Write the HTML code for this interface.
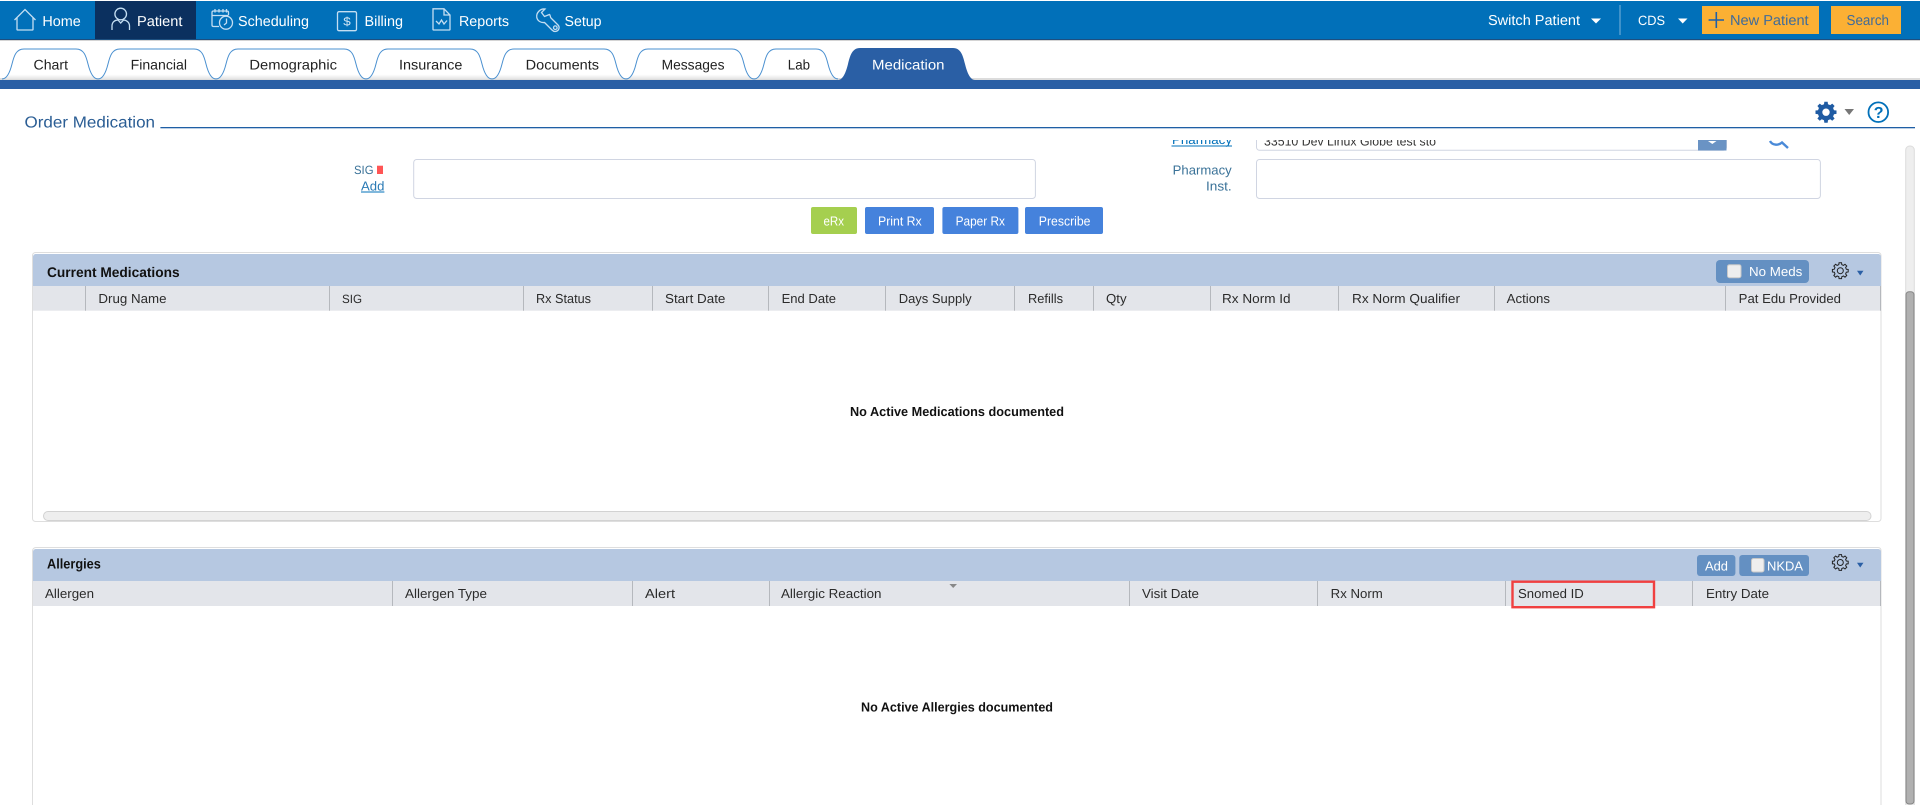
<!DOCTYPE html>
<html lang="en">
<head>
<meta charset="utf-8">
<title>Order Medication</title>
<style>
html,body{margin:0;padding:0;background:#fff;width:1920px;height:805px;overflow:hidden}
svg{display:block}
text{font-family:"Liberation Sans",Arial,sans-serif;text-rendering:geometricPrecision}
.n{font-size:14.4px;fill:#fff}
.t{font-size:14px;fill:#222}
.h{font-size:13px;fill:#2b2b2b}
.b{font-weight:700;font-size:14px;fill:#111}
.l{font-size:13px;fill:#3a7298}
.w{font-size:13px;fill:#fff}
.ic{fill:none;stroke:#c4def2;stroke-width:1.3}
</style>
</head>
<body>
<svg xmlns="http://www.w3.org/2000/svg" width="1920" height="805" viewBox="0 0 1920 805">
<defs>
<clipPath id="c"><rect x="0" y="140" width="1920" height="30"/></clipPath>
<linearGradient id="tg" x1="0" y1="0" x2="0" y2="1"><stop offset="0" stop-color="#fff"/><stop offset=".85" stop-color="#fff"/><stop offset="1" stop-color="#e4e4e4"/></linearGradient>
<path id="g" d="M6.02-1.5 7.9-1.25V1.25L6.02 1.5 5.31 3.19 6.47 4.7 4.7 6.47 3.19 5.31 1.5 6.02 1.25 7.9H-1.25L-1.5 6.02-3.19 5.31-4.7 6.47-6.47 4.7-5.31 3.19-6.02 1.5-7.9 1.25V-1.25L-6.02-1.5-5.31-3.19-6.47-4.7-4.7-6.47-3.19-5.31-1.5-6.02-1.25-7.9H1.25L1.5-6.02 3.19-5.31 4.7-6.47 6.47-4.7 5.31-3.19Z"/>
</defs>

<!-- top nav -->
<rect x="0" y="1" width="1920" height="38" fill="#0170b9"/>
<rect x="0" y="39" width="1920" height="1" fill="#1d4f80"/>
<rect x="0" y="40" width="1920" height="1" fill="#d4d4d4"/>
<rect x="95" y="1" width="101" height="38" fill="#0b305f"/>

<path class="ic" d="M14.5 20 25 9.5 35.5 20M17 17.5V29.5C17 30 17.5 30 18 30H32C32.800 30 33 30 33 29.500V17.500"/>
<text class="n" x="42.400" y="26" textLength="38.400" lengthAdjust="spacingAndGlyphs">Home</text>

<circle class="ic" cx="120.700" cy="14" r="5.800"/>
<path class="ic" d="M112 30V26C112 22 115 20 118 20L120.700 23 123.500 20C126 20 129.500 22 129.500 26V30"/>
<text class="n" x="137" y="26" textLength="45.400" lengthAdjust="spacingAndGlyphs">Patient</text>

<path class="ic" d="M219 26.500H213.500C212.500 26.500 212 26 212 25V12.500C212 11.500 212.500 11 213.500 11H227C228 11 228.500 11.500 228.500 12.500V15M212 15.500H228.500M215 9V12.500M219 9V12.500M223 9V12.500M226.500 9V12.500"/>
<circle class="ic" cx="226" cy="22.700" r="6.500"/>
<path class="ic" d="M226.500 18.500V23L224 25"/>
<text class="n" x="238" y="26" textLength="71" lengthAdjust="spacingAndGlyphs">Scheduling</text>

<rect class="ic" x="337.500" y="11.700" width="19" height="19" rx="1.500"/>
<text x="343.300" y="25.500" font-size="12" fill="#d5e8f6" textLength="7.500" lengthAdjust="spacingAndGlyphs">$</text>
<text class="n" x="364.500" y="26" textLength="38.500" lengthAdjust="spacingAndGlyphs">Billing</text>

<path class="ic" d="M433 8.800H444L450 15V29.500C450 30 449.700 30 449 30H434C433.300 30 433 30 433 29.500ZM444 8.800V15H450M436 21 439 24 441.500 20 444 24 447 20.500"/>
<text class="n" x="459" y="26" textLength="50" lengthAdjust="spacingAndGlyphs">Reports</text>

<path class="ic" d="M545 9 541.500 12.500 544.500 16.500 549.500 14.500C550.500 15 550 17 551 18L558 25C560 27 559 30 557 31 555 32 553 31 552 30L544.500 22.500C541 23 537.500 21 536.800 17.500 536 13 540 8.500 545 9Z"/>
<circle class="ic" cx="555.300" cy="27.700" r="1.800"/>
<text class="n" x="564.500" y="26" textLength="37" lengthAdjust="spacingAndGlyphs">Setup</text>

<text class="n" x="1488" y="25" textLength="92" lengthAdjust="spacingAndGlyphs">Switch Patient</text>
<path d="M1591 18.500H1601L1596 23.500Z" fill="#fff"/>
<rect x="1619.500" y="5" width="1" height="30" fill="#7db3da"/>
<text class="n" style="font-size:13.500px" x="1638" y="25" textLength="27" lengthAdjust="spacingAndGlyphs">CDS</text>
<path d="M1678 18.500H1687.500L1682.700 23.500Z" fill="#fff"/>

<rect x="1702" y="6" width="117" height="28" fill="#fbb034"/>
<path d="M1708.600 20H1724M1716.300 12V28" stroke="#1f5fa8" stroke-width="1.600" fill="none"/>
<text class="n" style="fill:#3f6b9a" x="1730" y="25" textLength="78.600" lengthAdjust="spacingAndGlyphs">New Patient</text>
<rect x="1831" y="6" width="70" height="28" fill="#fbb034"/>
<text class="n" style="fill:#3f6b9a" x="1846.500" y="25" textLength="42.500" lengthAdjust="spacingAndGlyphs">Search</text>

<!-- tab row -->
<rect x="0" y="78" width="1920" height="2" fill="#dcdcdc"/>
<rect x="0" y="80" width="1920" height="9" fill="#2a5fa5"/>
<g fill="url(#tg)" stroke="#4a90d0" stroke-width="1">
<path d="M2 79C7 79 10 72 12 64 14 56 16 49 24 49H76C84 49 86 56 88 64 90 72 93 79 98 79"/>
<path d="M98 79C103 79 106 72 108 64 110 56 112 49 120 49H194C202 49 204 56 206 64 208 72 211 79 216 79"/>
<path d="M216 79C221 79 224 72 226 64 228 56 230 49 238 49H344C352 49 354 56 356 64 358 72 361 79 366 79"/>
<path d="M366 79C371 79 374 72 376 64 378 56 380 49 388 49H470C478 49 480 56 482 64 484 72 487 79 492 79"/>
<path d="M492 79C497 79 500 72 502 64 504 56 506 49 514 49H604C612 49 614 56 616 64 618 72 621 79 626 79"/>
<path d="M626 79C631 79 634 72 636 64 638 56 640 49 648 49H732C740 49 742 56 744 64 746 72 749 79 754 79"/>
<path d="M754 79C759 79 762 72 764 64 766 56 768 49 776 49H816C824 49 826 56 828 64 830 72 833 79 838 79"/>
</g>
<path d="M838 80C843 80 846 72 848 64 850 56 852 48 860 48H953C961 48 963 56 965 64 967 72 970 80 975 80Z" fill="#2a5fa5"/>
<text class="t" x="33.500" y="69.500" textLength="34.500" lengthAdjust="spacingAndGlyphs">Chart</text>
<text class="t" x="130.600" y="69.500" textLength="56.400" lengthAdjust="spacingAndGlyphs">Financial</text>
<text class="t" x="249.400" y="69.500" textLength="87.600" lengthAdjust="spacingAndGlyphs">Demographic</text>
<text class="t" x="399" y="69.500" textLength="63.400" lengthAdjust="spacingAndGlyphs">Insurance</text>
<text class="t" x="525.700" y="69.500" textLength="73.300" lengthAdjust="spacingAndGlyphs">Documents</text>
<text class="t" x="661.600" y="69.500" textLength="62.900" lengthAdjust="spacingAndGlyphs">Messages</text>
<text class="t" x="787.800" y="69.500" textLength="22.200" lengthAdjust="spacingAndGlyphs">Lab</text>
<text class="t" style="fill:#fff" x="872" y="69.500" textLength="72.500" lengthAdjust="spacingAndGlyphs">Medication</text>

<!-- page heading -->
<text x="24.500" y="127.500" font-size="16" fill="#2a5d94" textLength="130.500" lengthAdjust="spacingAndGlyphs">Order Medication</text>
<rect x="160.400" y="127" width="1754.600" height="1.300" fill="#1f5fa5"/>
<g transform="translate(1826 112.200) scale(1.33)" fill="#1f5ba3"><use href="#g"/></g>
<circle cx="1826" cy="112.200" r="3.700" fill="#fff"/>
<path d="M1844.500 109H1854L1849.200 115Z" fill="#777"/>
<circle cx="1878.300" cy="112.200" r="9.800" fill="none" stroke="#0170b9" stroke-width="1.800"/>
<text x="1873.800" y="118" font-size="16" font-weight="700" fill="#0170b9">?</text>

<!-- clipped scrolled form row -->
<g clip-path="url(#c)">
<text class="l" style="fill:#0170b9" x="1172" y="144" textLength="60" lengthAdjust="spacingAndGlyphs">Pharmacy</text>
<rect x="1171.500" y="145.500" width="60.500" height="1" fill="#0170b9"/>
<rect x="1256.500" y="125" width="470" height="25.300" rx="3" fill="#fff" stroke="#d0d5e2"/>
<text x="1264" y="145.500" font-size="12.500" fill="#333" textLength="172" lengthAdjust="spacingAndGlyphs">33510 Dev Linux Globe test sto</text>
<rect x="1698" y="130" width="28.500" height="20.500" fill="#6a93c4"/>
<path d="M1708 141 1712.300 144 1716.500 141Z" fill="#fff"/>
<path d="M1770 141C1772 145 1778 146 1782 142.500L1788 148" fill="none" stroke="#4a8ad8" stroke-width="2.400"/>
</g>

<!-- SIG row -->
<text class="l" style="font-size:12px" x="354" y="174" textLength="19.500" lengthAdjust="spacingAndGlyphs">SIG</text>
<rect x="377" y="165.700" width="6" height="8.300" fill="#ff5555"/>
<text class="l" style="fill:#2a7ab5" x="361" y="190.500" textLength="23.400" lengthAdjust="spacingAndGlyphs">Add</text>
<rect x="361" y="191.500" width="23.400" height="1" fill="#0170b9"/>
<rect x="413.700" y="159.500" width="621.700" height="39" rx="3" fill="#fff" stroke="#d0d5e2"/>
<text class="l" x="1172.700" y="174.500" textLength="59" lengthAdjust="spacingAndGlyphs">Pharmacy</text>
<text class="l" x="1206" y="190.500" textLength="25.700" lengthAdjust="spacingAndGlyphs">Inst.</text>
<rect x="1256.500" y="159.500" width="563.900" height="39" rx="3" fill="#fff" stroke="#d0d5e2"/>

<rect x="811" y="207" width="46" height="27" rx="2" fill="#a5cf4f"/>
<rect x="865" y="207" width="69" height="27" rx="2" fill="#4582dc"/>
<rect x="942.400" y="207" width="76" height="27" rx="2" fill="#4582dc"/>
<rect x="1025" y="207" width="78" height="27" rx="2" fill="#4582dc"/>
<text class="w" x="823.500" y="225.500" textLength="20.500" lengthAdjust="spacingAndGlyphs">eRx</text>
<text class="w" x="878" y="225.500" textLength="43.700" lengthAdjust="spacingAndGlyphs">Print Rx</text>
<text class="w" x="955.600" y="225.500" textLength="49.400" lengthAdjust="spacingAndGlyphs">Paper Rx</text>
<text class="w" x="1038.800" y="225.500" textLength="51.700" lengthAdjust="spacingAndGlyphs">Prescribe</text>

<!-- current medications panel -->
<rect x="32.500" y="252.500" width="1848.500" height="269" rx="3" fill="#fff" stroke="#dedede"/>
<path d="M33 286V257C33 255 34.500 254 36 254H1878C1879.500 254 1881 255 1881 257V286Z" fill="#b6c8e1"/>
<rect x="33" y="286" width="1847.500" height="24.700" fill="#e3e5ea"/>
<g fill="#b5b8bd">
<rect x="85" y="286" width="1" height="24.700"/><rect x="329" y="286" width="1" height="24.700"/><rect x="523" y="286" width="1" height="24.700"/><rect x="652" y="286" width="1" height="24.700"/><rect x="768" y="286" width="1" height="24.700"/><rect x="885" y="286" width="1" height="24.700"/><rect x="1014" y="286" width="1" height="24.700"/><rect x="1093" y="286" width="1" height="24.700"/><rect x="1210" y="286" width="1" height="24.700"/><rect x="1338" y="286" width="1" height="24.700"/><rect x="1494" y="286" width="1" height="24.700"/><rect x="1725" y="286" width="1" height="24.700"/><rect x="1880" y="286" width="1" height="24.700"/>
</g>
<text class="b" x="47" y="277" textLength="132.600" lengthAdjust="spacingAndGlyphs">Current Medications</text>
<text class="h" x="98.400" y="303" textLength="68.100" lengthAdjust="spacingAndGlyphs">Drug Name</text>
<text class="h" style="font-size:12px" x="342" y="303" textLength="20" lengthAdjust="spacingAndGlyphs">SIG</text>
<text class="h" x="536" y="303" textLength="55" lengthAdjust="spacingAndGlyphs">Rx Status</text>
<text class="h" x="665" y="303" textLength="60.400" lengthAdjust="spacingAndGlyphs">Start Date</text>
<text class="h" x="781.600" y="303" textLength="54.400" lengthAdjust="spacingAndGlyphs">End Date</text>
<text class="h" x="898.700" y="303" textLength="72.900" lengthAdjust="spacingAndGlyphs">Days Supply</text>
<text class="h" x="1028" y="303" textLength="35" lengthAdjust="spacingAndGlyphs">Refills</text>
<text class="h" x="1106" y="303" textLength="20.600" lengthAdjust="spacingAndGlyphs">Qty</text>
<text class="h" x="1222" y="303" textLength="68.600" lengthAdjust="spacingAndGlyphs">Rx Norm Id</text>
<text class="h" x="1352" y="303" textLength="108" lengthAdjust="spacingAndGlyphs">Rx Norm Qualifier</text>
<text class="h" x="1506.700" y="303" textLength="43.300" lengthAdjust="spacingAndGlyphs">Actions</text>
<text class="h" x="1738.700" y="303" textLength="102.300" lengthAdjust="spacingAndGlyphs">Pat Edu Provided</text>

<rect x="1716" y="260" width="93" height="23" rx="4" fill="#6490c2"/>
<rect x="1727.500" y="264.700" width="13.500" height="13" rx="2" fill="#eee" stroke="#c8c8c8"/>
<text class="w" x="1749" y="276" textLength="53.300" lengthAdjust="spacingAndGlyphs">No Meds</text>
<g transform="translate(1840.300 270.700)" fill="none" stroke="#222" stroke-width="1"><use href="#g"/><circle r="3"/></g>
<path d="M1857 270.700H1863.500L1860.200 275.500Z" fill="#2a5fa5"/>

<text class="b" style="font-size:13px" x="850" y="416" textLength="214" lengthAdjust="spacingAndGlyphs">No Active Medications documented</text>
<rect x="43.500" y="511.500" width="1827.500" height="9" rx="4.500" fill="#eee" stroke="#d2d2d2"/>

<!-- allergies panel -->
<path d="M32.500 805V551C32.500 549 34 547.500 36 547.500H1878C1880 547.500 1881 549 1881 551V805" fill="#fff" stroke="#dedede"/>
<path d="M33 581V552C33 550 34.500 549 36 549H1878C1879.500 549 1881 550 1881 552V581Z" fill="#b6c8e1"/>
<rect x="33" y="581" width="1847.500" height="25" fill="#e3e5ea"/>
<g fill="#b5b8bd">
<rect x="392" y="581" width="1" height="25"/><rect x="632" y="581" width="1" height="25"/><rect x="769" y="581" width="1" height="25"/><rect x="1129" y="581" width="1" height="25"/><rect x="1317" y="581" width="1" height="25"/><rect x="1505" y="581" width="1" height="25"/><rect x="1692" y="581" width="1" height="25"/><rect x="1880" y="581" width="1" height="25"/>
</g>
<text class="b" x="47" y="568.500" textLength="53.800" lengthAdjust="spacingAndGlyphs">Allergies</text>
<text class="h" x="45" y="598" textLength="49" lengthAdjust="spacingAndGlyphs">Allergen</text>
<text class="h" x="405" y="598" textLength="82" lengthAdjust="spacingAndGlyphs">Allergen Type</text>
<text class="h" x="645" y="598" textLength="30" lengthAdjust="spacingAndGlyphs">Alert</text>
<text class="h" x="781" y="598" textLength="100.500" lengthAdjust="spacingAndGlyphs">Allergic Reaction</text>
<text class="h" x="1142" y="598" textLength="57" lengthAdjust="spacingAndGlyphs">Visit Date</text>
<text class="h" x="1330.700" y="598" textLength="52.100" lengthAdjust="spacingAndGlyphs">Rx Norm</text>
<text class="h" x="1518" y="598" textLength="65.800" lengthAdjust="spacingAndGlyphs">Snomed ID</text>
<text class="h" x="1706" y="598" textLength="63" lengthAdjust="spacingAndGlyphs">Entry Date</text>
<path d="M949.400 584H957L953.200 588Z" fill="#888"/>
<rect x="1512.500" y="581.700" width="141.500" height="25.500" fill="none" stroke="#f04040" stroke-width="2.400"/>

<rect x="1697" y="555" width="38.400" height="21" rx="3" fill="#6490c2"/>
<text class="w" x="1705" y="570.500" textLength="23" lengthAdjust="spacingAndGlyphs">Add</text>
<rect x="1739.300" y="555" width="69.700" height="21" rx="3" fill="#6490c2"/>
<rect x="1751.500" y="558.500" width="12.500" height="13.500" rx="2" fill="#eee" stroke="#c8c8c8"/>
<text class="w" x="1767" y="570.500" textLength="36" lengthAdjust="spacingAndGlyphs">NKDA</text>
<g transform="translate(1840.300 562.500)" fill="none" stroke="#222" stroke-width="1"><use href="#g"/><circle r="3"/></g>
<path d="M1857 562.700H1863.500L1860.200 567.500Z" fill="#2a5fa5"/>

<text class="b" style="font-size:13px" x="861" y="711.500" textLength="192" lengthAdjust="spacingAndGlyphs">No Active Allergies documented</text>

<!-- page scrollbar -->
<rect x="1905.700" y="146" width="8.600" height="670" rx="4" fill="#eee" stroke="#dcdcdc"/>
<rect x="1906" y="291.700" width="8" height="512.300" rx="3" fill="#b0b0b0" stroke="#858585"/>
</svg>
</body>
</html>
